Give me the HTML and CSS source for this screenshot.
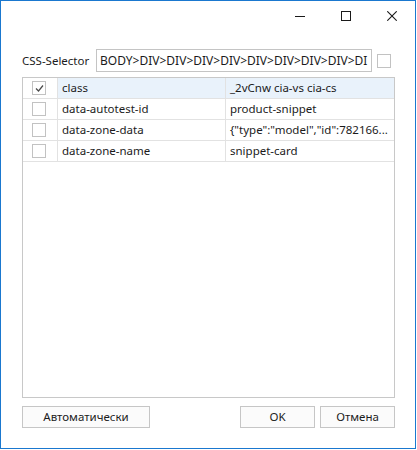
FILE: index.html
```html
<!DOCTYPE html>
<html lang="ru">
<head>
<meta charset="utf-8">
<title>CSS-Selector</title>
<link rel="stylesheet" href="styles.css">
</head>
<body>
<div class="window">
  <div class="titlebar">
    <div class="tbtn">
      <svg width="10" height="10" viewBox="0 0 10 10"><line x1="0" y1="5.5" x2="10" y2="5.5" stroke="#1a1a1a" stroke-width="1"/></svg>
    </div>
    <div class="tbtn">
      <svg width="10" height="10" viewBox="0 0 10 10"><rect x="0.5" y="0.5" width="9" height="9" fill="none" stroke="#1a1a1a" stroke-width="1"/></svg>
    </div>
    <div class="tbtn">
      <svg width="10" height="10" viewBox="0 0 10 10"><path d="M0.3 0.3 L9.7 9.7 M9.7 0.3 L0.3 9.7" stroke="#1a1a1a" stroke-width="1.1" fill="none"/></svg>
    </div>
  </div>
  <div class="content">
    <div class="selector-row">
      <span class="label">CSS-Selector</span>
      <div class="input"><span class="input-text">BODY&gt;DIV&gt;DIV&gt;DIV&gt;DIV&gt;DIV&gt;DIV&gt;DIV&gt;DIV&gt;DI</span></div>
      <span class="cb cb-side"></span>
    </div>
    <div class="grid">
      <div class="row row-selected">
        <div class="cell cell-check"><span class="cb cb-checked"><svg width="11" height="11" viewBox="0 0 11 11"><path d="M2 5.5 L4.5 8 L9 2.5" stroke="#4a4a4a" stroke-width="1.2" fill="none"/></svg></span></div>
        <div class="cell cell-name">class</div>
        <div class="cell cell-value">_2vCnw cia-vs cia-cs</div>
      </div>
      <div class="row">
        <div class="cell cell-check"><span class="cb"></span></div>
        <div class="cell cell-name">data-autotest-id</div>
        <div class="cell cell-value">product-snippet</div>
      </div>
      <div class="row">
        <div class="cell cell-check"><span class="cb"></span></div>
        <div class="cell cell-name">data-zone-data</div>
        <div class="cell cell-value">{"type":"model","id":782166...</div>
      </div>
      <div class="row">
        <div class="cell cell-check"><span class="cb"></span></div>
        <div class="cell cell-name">data-zone-name</div>
        <div class="cell cell-value">snippet-card</div>
      </div>
    </div>
    <div class="buttons">
      <div class="btn btn-auto">Автоматически</div>
      <div class="spacer"></div>
      <div class="btn btn-small">OK</div>
      <div class="btn btn-small">Отмена</div>
    </div>
  </div>
</div>
</body>
</html>
```
FILE: styles.css
```css
html, body {
  margin: 0;
  padding: 0;
  background: #ffffff;
}
body {
  font-family: "Noto Sans", "Open Sans", sans-serif;
  font-size: 11.5px;
  color: #1b1b1b;
}
.window {
  width: 416px;
  height: 449px;
  box-sizing: border-box;
  border: 1px solid #1a78cf;
  background: #ffffff;
  display: flex;
  flex-direction: column;
}
.titlebar {
  height: 30px;
  display: flex;
  justify-content: flex-end;
}
.tbtn {
  width: 46px;
  height: 30px;
  display: flex;
  align-items: center;
  justify-content: center;
}
.tbtn svg {
  display: block;
}
.content {
  padding: 18px 20px 0 21px;
  display: flex;
  flex-direction: column;
}
.selector-row {
  display: flex;
  align-items: center;
  height: 23px;
}
.label {
  width: 74px;
  line-height: 23px;
  white-space: nowrap;
}
.input {
  width: 276px;
  height: 23px;
  box-sizing: border-box;
  border: 1px solid #c4c4c4;
  padding: 0 3px;
  overflow: hidden;
  white-space: nowrap;
  line-height: 21px;
  font-size: 12px;
}
.cb {
  width: 14px;
  height: 14px;
  box-sizing: border-box;
  border: 1px solid #c2c2c2;
  background: #ffffff;
  display: flex;
  align-items: center;
  justify-content: center;
}
.cb-side {
  margin-left: 5px;
}
.cb-checked svg {
  display: block;
}
.grid {
  margin-top: 5px;
  height: 321px;
  box-sizing: border-box;
  border: 1px solid #c8c8c8;
  display: flex;
  flex-direction: column;
}
.row {
  display: grid;
  grid-template-columns: 35px 168px 1fr;
  height: 21px;
  box-sizing: border-box;
  border-bottom: 1px solid #e2e2e2;
}
.row-selected .cell-name,
.row-selected .cell-value {
  background: #e9f2fb;
}
.cell {
  box-sizing: border-box;
  line-height: 20px;
  white-space: nowrap;
  overflow: hidden;
}
.cell-check {
  border-right: 1px solid #e2e2e2;
  display: flex;
  align-items: center;
  justify-content: center;
  padding-right: 2px;
}
.cell-name {
  border-right: 1px solid #e2e2e2;
  padding-left: 4px;
}
.cell-value {
  padding-left: 4px;
}
.buttons {
  margin-top: 8px;
  display: flex;
  gap: 5px;
}
.spacer {
  flex: 1;
}
.btn {
  height: 22px;
  box-sizing: border-box;
  border: 1px solid #c6c6c6;
  background: #fbfbfb;
  display: flex;
  align-items: center;
  justify-content: center;
  line-height: 20px;
}
.btn-auto {
  width: 128px;
}
.btn-small {
  width: 75px;
}
```
